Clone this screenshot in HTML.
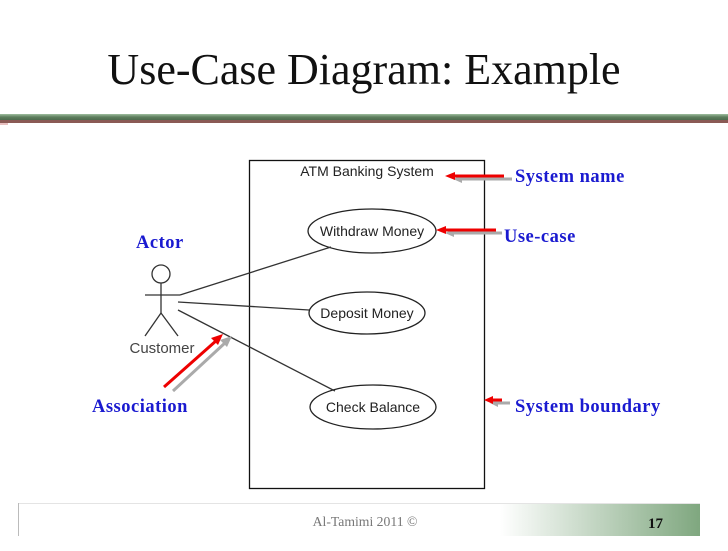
<!DOCTYPE html><html><head><style>body{margin:0;width:728px;height:546px;overflow:hidden;background:#fff}</style></head><body>
<svg width="728" height="546" xmlns="http://www.w3.org/2000/svg">
<defs>
<linearGradient id="g" x1="0" x2="1"><stop offset="0" stop-color="#fff"/><stop offset="1" stop-color="#7fa77f"/></linearGradient>
<linearGradient id="b" x1="0" y1="0" x2="0" y2="1"><stop offset="0" stop-color="#9fbf9f"/><stop offset="0.5" stop-color="#5e7e5e"/><stop offset="1" stop-color="#4d6b4d"/></linearGradient>
</defs>
<text x="364" y="84" font-family="Liberation Serif,serif" font-size="44" text-anchor="middle" fill="#111">Use-Case Diagram: Example</text>
<rect x="0" y="114" width="728" height="6" fill="url(#b)"/>
<rect x="0" y="120" width="728" height="3" fill="#8a5a55"/>
<rect x="0" y="123" width="8" height="2" fill="#e8c0c0"/>
<rect x="249.5" y="160.5" width="235" height="328" fill="none" stroke="#111" stroke-width="1.3"/>
<g font-family="Liberation Sans,sans-serif" font-size="14" fill="#222">
<text x="367" y="176" text-anchor="middle" font-size="14">ATM Banking System</text>
<ellipse cx="372" cy="231" rx="64" ry="22" fill="none" stroke="#222" stroke-width="1.3"/>
<text x="372" y="236" text-anchor="middle">Withdraw Money</text>
<ellipse cx="367" cy="313" rx="58" ry="21" fill="none" stroke="#222" stroke-width="1.3"/>
<text x="367" y="318" text-anchor="middle">Deposit Money</text>
<ellipse cx="373" cy="407" rx="63" ry="22" fill="none" stroke="#222" stroke-width="1.3"/>
<text x="373" y="412" text-anchor="middle">Check Balance</text>
<text x="162" y="353" text-anchor="middle" font-size="15" fill="#444">Customer</text>
</g>
<g stroke="#333" stroke-width="1.3" fill="none">
<circle cx="161" cy="274" r="9"/>
<line x1="145" y1="295" x2="180" y2="295"/>
<line x1="161" y1="283" x2="161" y2="313"/>
<line x1="161" y1="313" x2="145" y2="336"/>
<line x1="161" y1="313" x2="178" y2="336"/>
<line x1="180" y1="295" x2="331" y2="247"/>
<line x1="178" y1="302" x2="309" y2="310"/>
<line x1="178" y1="310" x2="335" y2="391"/>
</g>
<g stroke-width="3">
<line x1="173" y1="391" x2="226" y2="342" stroke="#aaa"/><polygon points="232,336 220,340 227,347" fill="#aaa"/>
<line x1="164" y1="387" x2="217" y2="340" stroke="#e00"/><polygon points="223,334 211,338 218,345" fill="#e00"/>
<line x1="512" y1="179" x2="460" y2="179" stroke="#aaa"/><polygon points="453,179 462,175 462,183" fill="#aaa"/>
<line x1="504" y1="176" x2="453" y2="176" stroke="#e00"/><polygon points="445,176 455,172 455,180" fill="#e00"/>
<line x1="502" y1="233" x2="452" y2="233" stroke="#aaa"/><polygon points="445,233 454,229 454,237" fill="#aaa"/>
<line x1="496" y1="230" x2="444" y2="230" stroke="#e00"/><polygon points="436,230 446,226 446,234" fill="#e00"/>
<line x1="510" y1="403" x2="496" y2="403" stroke="#aaa"/><polygon points="490,403 498,399 498,407" fill="#aaa"/>
<line x1="502" y1="400" x2="491" y2="400" stroke="#e00"/><polygon points="484,400 493,396 493,404" fill="#e00"/>
</g>
<g font-family="Liberation Serif,serif" font-size="18.5" font-weight="bold" fill="#1a1ad0" letter-spacing="0.5">
<text x="136" y="248">Actor</text>
<text x="92" y="412">Association</text>
<text x="515" y="182">System name</text>
<text x="504" y="242">Use-case</text>
<text x="515" y="412">System boundary</text>
</g>
<rect x="500" y="503" width="200" height="33" fill="url(#g)"/>
<line x1="18" y1="503.5" x2="700" y2="503.5" stroke="#e4e4e4"/>
<line x1="18.5" y1="503" x2="18.5" y2="536" stroke="#bbb"/>
<text x="365" y="526" font-family="Liberation Serif,serif" font-size="13.7" fill="#777" text-anchor="middle">Al-Tamimi 2011 ©</text>
<text x="648" y="528" font-family="Liberation Serif,serif" font-size="15" font-weight="bold" fill="#111">17</text>
</svg>
</body></html>
